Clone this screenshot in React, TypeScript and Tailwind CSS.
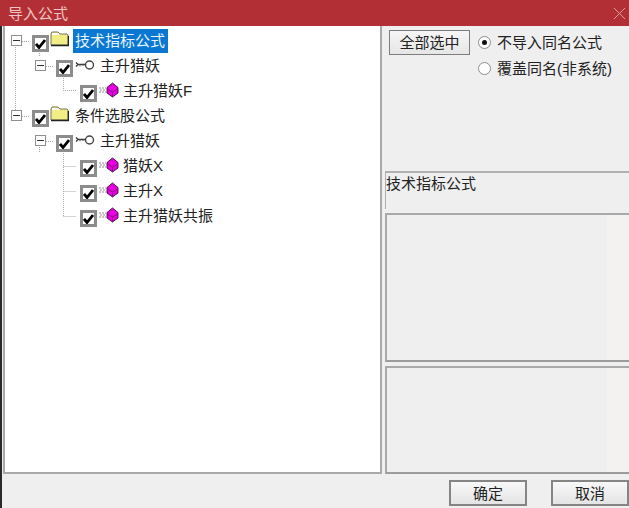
const font = "font-['Liberation_Sans','Noto_Sans_CJK_SC',sans-serif]";

function Expander() {
  return (
    <span className="flex h-[11px] w-[11px] shrink-0 items-center justify-center border border-[#8f8f8f] bg-white">
      <span className="h-px w-[7px] bg-[#333]" />
    </span>
  );
}

function Check() {
  return (
    <span className="flex h-[17px] w-[17px] shrink-0 items-center justify-center border-[3px] border-[#8c8c8c] bg-white">
      <svg width="11" height="10" viewBox="0 0 11 10">
        <path d="M1 5 L4 8.5 L10 1" fill="none" stroke="#000" strokeWidth="2.8" />
      </svg>
    </span>
  );
}

function Folder() {
  return (
    <svg width="19" height="16" viewBox="0 0 19 16" className="shrink-0">
      <path d="M1 3 L2 1 H8 L10 3 H17 L18 4 V14 H1 Z" fill="#f2ee86" stroke="#77745a" />
      <path d="M1 14.5 H18.5 V5" fill="none" stroke="#222" strokeWidth="1.4" />
      <path d="M2 2 H8 L9.5 4 H2 Z" fill="#fff" />
    </svg>
  );
}

function KeyIcon() {
  return (
    <svg width="20" height="12" viewBox="0 0 20 12" className="shrink-0">
      <path d="M1 3.5 L3 5.5 H11 M1 7.5 L3 5.5" stroke="#333" strokeWidth="1.3" fill="none" />
      <path d="M5 5.5 V7.5 M8 5.5 V7" stroke="#777" fill="none" />
      <circle cx="14.5" cy="6" r="4" fill="#fff" stroke="#444" strokeWidth="1.4" />
    </svg>
  );
}

function Gem() {
  return (
    <svg width="21" height="16" viewBox="0 0 21 16" className="shrink-0">
      <path d="M1 6 H8 M2 8 H8 M1 10 H8" stroke="#909090" strokeDasharray="2 1" fill="none" />
      <path d="M14.5 1 L20 5.5 V11 L14.5 15 L9 11 V5.5 Z" fill="#e800e0" stroke="#3a103a" strokeWidth="0.9" />
      <path d="M9 7 L14.5 10 L20 7 M14.5 10 V15" fill="none" stroke="#7a0a78" strokeWidth="0.8" />
    </svg>
  );
}

type RowProps = { depth: number; kind: "folder" | "key" | "gem"; label: string; selected?: boolean };

function TreeRow({ depth, kind, label, selected }: RowProps) {
  const pad = depth === 0 ? "pl-[6px]" : depth === 1 ? "pl-[30px]" : "pl-[75px]";
  return (
    <div className={`flex h-[25px] items-center ${pad}`}>
      {depth < 2 && <Expander />}
      {depth < 2 && <span className="w-[10px] shrink-0" />}
      <span className="relative top-[3px]">
        <Check />
      </span>
      {kind === "folder" && (
        <span className="relative top-[-2px] ml-[1px]">
          <Folder />
        </span>
      )}
      {kind === "key" && (
        <span className="relative top-[-1px] ml-[2px]">
          <KeyIcon />
        </span>
      )}
      {kind === "gem" && (
        <span className="relative top-[-1px] ml-[1px]">
          <Gem />
        </span>
      )}
      <span
        className={`flex h-[24px] items-center whitespace-nowrap text-[15px] leading-none ${
          kind === "folder" ? "ml-[4px] pl-[2px] pr-[3px]" : kind === "key" ? "ml-[5px]" : "ml-[4px]"
        } ${selected ? "bg-[#0a78d2] text-[#e8f4ff]" : "text-[#222]"}`}
      >
        {label}
      </span>
    </div>
  );
}

function Radio({ on, label }: { on?: boolean; label: string }) {
  return (
    <div className="flex h-[26px] items-center">
      <span className="flex h-[13px] w-[13px] items-center justify-center rounded-full border border-[#8d8d8d] bg-white">
        {on && <span className="h-[5px] w-[5px] rounded-full bg-[#111]" />}
      </span>
      <span className="ml-[6px] whitespace-nowrap text-[15px] leading-none text-[#222]">{label}</span>
    </div>
  );
}

function Sunken({ className }: { className: string }) {
  return (
    <div className={`flex border-2 border-r-0 border-[#a9a9a9] border-b-[#9c9c9c] ${className}`}>
      <div className="flex-1" />
      <div className="w-[22px] bg-[#f3f2f1]" />
    </div>
  );
}

function DialogButton({ label, className }: { label: string; className: string }) {
  return (
    <button
      type="button"
      className={`h-[26px] w-[78px] border-2 border-[#858585] bg-gradient-to-b from-[#f8f8f8] to-[#e4e4e4] text-[15px] leading-none text-[#222] ${className}`}
    >
      {label}
    </button>
  );
}

export default function App() {
  return (
    <div className={`${font} flex h-[508px] w-[629px] overflow-hidden bg-[#efefef]`}>
      <div className="flex w-[2px] shrink-0 flex-col">
        <div className="h-[26px] bg-[#b23035]" />
        <div className="flex-1 bg-[#2a2a2a]" />
      </div>
      <div className="flex min-w-0 flex-1 flex-col">
        <div className="flex h-[26px] shrink-0 items-center justify-between bg-[#b23035] pl-[6px] pr-[3px]">
          <span className="text-[15px] leading-none text-[#f0c4c4]">导入公式</span>
          <svg width="13" height="13" viewBox="0 0 13 13">
            <path d="M1 1 L12 12 M12 1 L1 12" stroke="#dc9a9c" strokeWidth="1" fill="none" />
          </svg>
        </div>

        <div className="flex h-[448px] shrink-0 pl-px">
          <div className="relative h-full w-[379px] border-x-2 border-b-2 border-[#a9a9a9] bg-white pt-[2px]">
            <svg width="110" height="200" className="absolute left-0 top-0" viewBox="0 0 110 200">
              <path
                d="M10.5 21 V86 M34.5 21 V30 M34.5 111 V126 M58.5 46 V64.5 H71 M58.5 121 V190.5 M58.5 140.5 H71 M58.5 165.5 H71 M58.5 190.5 H71 M17 15.5 H24 M41 40.5 H48 M17 90.5 H24 M41 115.5 H48"
                stroke="#a8a8a8"
                strokeDasharray="1 1"
                fill="none"
              />
            </svg>
            <div className="relative">
              <TreeRow depth={0} kind="folder" label="技术指标公式" selected />
              <TreeRow depth={1} kind="key" label="主升猎妖" />
              <TreeRow depth={2} kind="gem" label="主升猎妖F" />
              <TreeRow depth={0} kind="folder" label="条件选股公式" />
              <TreeRow depth={1} kind="key" label="主升猎妖" />
              <TreeRow depth={2} kind="gem" label="猎妖X" />
              <TreeRow depth={2} kind="gem" label="主升X" />
              <TreeRow depth={2} kind="gem" label="主升猎妖共振" />
            </div>
          </div>

          <div className="ml-[3px] flex min-w-0 flex-1 flex-col">
            <div className="flex h-[145px] shrink-0 items-start pl-[4px] pt-[4px]">
              <button
                type="button"
                className="h-[25px] w-[81px] border border-[#7d7d7d] bg-gradient-to-b from-[#f6f6f6] to-[#e6e6e6] text-[15px] leading-none text-[#222]"
              >
                全部选中
              </button>
              <div className="-mt-px ml-[8px] flex flex-col">
                <Radio on label="不导入同名公式" />
                <Radio label="覆盖同名(非系统)" />
              </div>
            </div>
            <div className="flex h-[38px] shrink-0 border-l border-t-2 border-[#b0b0b0] pt-[3px] text-[15px] leading-none text-[#222]">
              技术指标公式
            </div>
            <Sunken className="mt-[4px] h-[149px] shrink-0" />
            <Sunken className="mt-[4px] h-[108px] shrink-0" />
          </div>
        </div>

        <div className="flex flex-1 items-start pt-[6px]">
          <DialogButton label="确定" className="ml-[447px]" />
          <DialogButton label="取消" className="ml-[24px]" />
        </div>
      </div>
    </div>
  );
}
